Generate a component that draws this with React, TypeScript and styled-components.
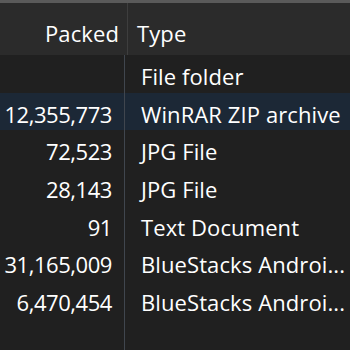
import styled, { createGlobalStyle } from "styled-components";

const GlobalStyle = createGlobalStyle`
  html, body {
    margin: 0;
    padding: 0;
    background: #202020;
    overflow: hidden;
  }
  body {
    font-family: "Segoe UI", "Open Sans", "Noto Sans", sans-serif;
    color: #ffffff;
  }
`;

interface IFileRow {
  packed: string;
  type: string;
}

const rows: IFileRow[] = [
  { packed: "", type: "File folder" },
  { packed: "12,355,773", type: "WinRAR ZIP archive" },
  { packed: "72,523", type: "JPG File" },
  { packed: "28,143", type: "JPG File" },
  { packed: "91", type: "Text Document" },
  { packed: "31,165,009", type: "BlueStacks Androi..." },
  { packed: "6,470,454", type: "BlueStacks Androi..." },
];

export default function App() {
  return (
    <>
      <GlobalStyle />
      <ListLayout>
        <HeaderRow>
          <HeaderPacked>Packed</HeaderPacked>
          <HeaderType>Type</HeaderType>
        </HeaderRow>
        {rows.map((row, i) => (
          <Row key={i} $selected={i === 1}>
            <PackedCell>{row.packed}</PackedCell>
            <TypeCell>{row.type}</TypeCell>
          </Row>
        ))}
        <Row $selected={false}>
          <PackedCell />
          <TypeCell />
        </Row>
      </ListLayout>
    </>
  );
}

const ListLayout = styled.div`
  display: flex;
  flex-direction: column;
  width: 350px;
  height: 350px;
  overflow: hidden;
  font-size: 22px;
  letter-spacing: 0.1px;
  background: #202020;
`;

const HeaderRow = styled.div`
  display: flex;
  flex-direction: row;
  height: 52px;
  flex: none;
  border-top: 3px solid #5a5a5a;
  background: #2b2b2b;
  align-items: stretch;
`;

const HeaderPacked = styled.div`
  width: 119px;
  flex: none;
  padding-right: 8px;
  padding-top: 8px;
  display: flex;
  align-items: center;
  justify-content: flex-end;
  border-right: 1px solid #3e3e3e;
`;

const HeaderType = styled.div`
  flex: 1;
  padding-left: 9px;
  padding-top: 8px;
  display: flex;
  align-items: center;
  white-space: nowrap;
`;

const Row = styled.div<{ $selected: boolean }>`
  display: flex;
  flex-direction: row;
  height: 37.6px;
  flex: none;
  background: ${(p) => (p.$selected ? "#1c2836" : "transparent")};
`;

const PackedCell = styled.div`
  width: 112px;
  flex: none;
  padding-right: 12px;
  padding-top: 5px;
  display: flex;
  align-items: center;
  justify-content: flex-end;
  letter-spacing: -0.45px;
  border-right: 1px solid #40464e;
`;

const TypeCell = styled.div`
  flex: 1;
  padding-left: 16px;
  padding-top: 5px;
  display: flex;
  align-items: center;
  white-space: nowrap;
  overflow: hidden;
`;
